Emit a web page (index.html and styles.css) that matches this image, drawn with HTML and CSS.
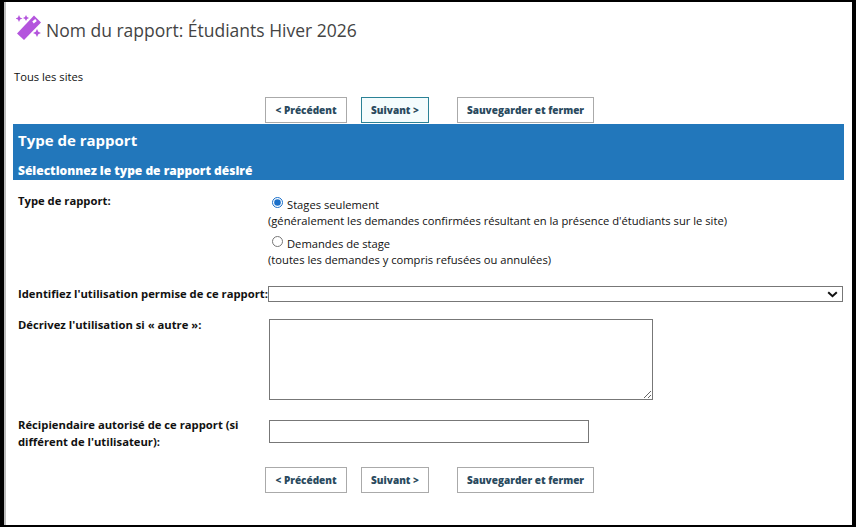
FILE: index.html
```html
<!DOCTYPE html>
<html lang="fr">
<head>
<meta charset="utf-8">
<title>Nom du rapport</title>
<link rel="stylesheet" href="styles.css">
</head>
<body>
<div class="frame">
  <div class="page">
    <header class="title-row">
      <svg class="wand" width="26" height="26" viewBox="0 0 26 26" aria-hidden="true">
        <path d="M18 .5 25 7.500 8 25 1 18.500Z" fill="#b455dd"/>
        <path d="M17 7.500 20 5" stroke="#fff" stroke-width="2.400"/>
        <path d="M3 0 4.100 2.400 6.500 3.500 4.100 4.600 3 7 1.900 4.600 -.5 3.500 1.900 2.400Z" fill="#b455dd"/>
        <path d="M10 0 11 2 13 3 11 4 10 6 9 4 7 3 9 2Z" fill="#b455dd"/>
        <path d="M21 14 22.300 16.700 25 18 22.300 19.300 21 22 19.700 19.300 17 18 19.700 16.700Z" fill="#b455dd"/>
      </svg>
      <h1 class="title">Nom du rapport: Étudiants Hiver 2026</h1>
    </header>
    <p class="sites">Tous les sites</p>
    <div class="actions actions-top">
      <button class="btn btn-prev" type="button">&lt; Précédent</button>
      <button class="btn btn-next btn-focus" type="button">Suivant &gt;</button>
      <button class="btn btn-save" type="button">Sauvegarder et fermer</button>
    </div>
    <section class="banner">
      <h2 class="banner-title">Type de rapport</h2>
      <h3 class="banner-sub">Sélectionnez le type de rapport désiré</h3>
    </section>
    <form class="form">
      <div class="row row-type">
        <div class="label">Type de rapport:</div>
        <div class="options">
          <label class="radio-line"><input class="radio" type="radio" name="t" checked>Stages seulement</label>
          <div class="hint">(généralement les demandes confirmées résultant en la présence d'étudiants sur le site)</div>
          <label class="radio-line radio-second"><input class="radio" type="radio" name="t">Demandes de stage</label>
          <div class="hint">(toutes les demandes y compris refusées ou annulées)</div>
        </div>
      </div>
      <div class="row row-use">
        <div class="label">Identifiez l'utilisation permise de ce rapport:</div>
        <div class="select-box">
          <svg class="chev" width="11" height="7" viewBox="0 0 11 7" aria-hidden="true"><path d="M1.200 1.200 5.500 5.200 9.800 1.200" fill="none" stroke="#111" stroke-width="2"/></svg>
        </div>
      </div>
      <div class="row row-desc">
        <div class="label label-desc">Décrivez l'utilisation si « autre »:</div>
        <textarea class="area"></textarea>
      </div>
      <div class="row row-recip">
        <div class="label label-wide">Récipiendaire autorisé de ce rapport (si différent de l'utilisateur):</div>
        <input class="text" type="text">
      </div>
    </form>
    <div class="actions actions-bottom">
      <button class="btn btn-prev" type="button">&lt; Précédent</button>
      <button class="btn btn-next" type="button">Suivant &gt;</button>
      <button class="btn btn-save" type="button">Sauvegarder et fermer</button>
    </div>
  </div>
</div>
</body>
</html>
```

FILE: styles.css
```css
* { box-sizing: border-box; }
html, body { margin: 0; padding: 0; }
body { width: 856px; height: 527px; overflow: hidden; background: #000; font-family: "Open Sans", sans-serif; color: #111; }
.frame { margin: 2px 4px 2px 4px; height: 523px; width: 848px; background: #fff; border-left: 2px solid #bdbdbd; overflow: hidden; }
.page { padding-left: 7px; }
.title-row { display: flex; align-items: center; height: 38px; padding-left: 3px; margin-top: 9px; }
.wand { flex: none; margin-top: -4px; }
.title { margin: 0 0 0 4px; font-size: 17.5px; font-weight: 400; color: #444; line-height: 24px; white-space: nowrap; }
.sites { margin: 20px 0 0 1px; font-size: 11.2px; line-height: 16px; color: #111; }
.actions { display: flex; padding-left: 252px; }
.actions-top { margin-top: 12px; }
.actions-bottom { margin-top: 17px; }
.btn { height: 26px; padding: 0; background: #fff; border: 1px solid #aaa; font: 800 10px "Open Sans", sans-serif; color: #2a4a5e; text-align: center; white-space: nowrap; }
.btn-prev { width: 82px; }
.btn-next { width: 68px; margin-left: 14px; }
.btn-save { width: 137px; margin-left: 28px; }
.btn-focus { background: #f4fcfd; border-color: #2b8296; }
.banner { width: 831px; height: 56px; margin-top: 1px; background: #2277bb; color: #fff; padding: 6px 0 0 5px; }
.banner-title { margin: 0; font-size: 15px; line-height: 20px; font-weight: 700; }
.banner-sub { margin: 13px 0 0; font-size: 12px; line-height: 16px; font-weight: 800; }
.form { padding-left: 5px; }
.row { display: flex; }
.label { width: 250px; flex: none; font-size: 11.25px; font-weight: 700; line-height: 16px; white-space: nowrap; color: #111; }
.row-type { margin-top: 13px; height: 92px; }
.options { font-size: 11.2px; line-height: 16px; }
.radio-line { display: flex; align-items: center; height: 16px; padding-left: 4px; font-size: 11.2px; margin-top: 4px; }
.radio-second { margin-top: 7px; }
.radio { width: 11px; height: 11px; margin: -5px 4px 0 0; accent-color: #1a6fc9; }
.hint { line-height: 16px; white-space: nowrap; }
.row-use { margin-top: 1px; height: 16px; }
.select-box { width: 575px; height: 16px; border: 1px solid #777; display: flex; align-items: center; justify-content: flex-end; padding-right: 4px; }
.row-desc { margin-top: 17px; }
.label-desc { width: 251px; margin-top: -2px; }
.area { width: 384px; height: 81px; border: 1px solid #777; margin: 0; padding: 2px; display: block; border-radius: 0; }
.row-recip { margin-top: 20px; }
.label-wide { white-space: normal; width: 241px; margin-right: 10px; margin-top: -4px; line-height: 17px; }
.text { width: 320px; height: 23px; margin: 0; border: 1px solid #777; border-radius: 0; }
```
